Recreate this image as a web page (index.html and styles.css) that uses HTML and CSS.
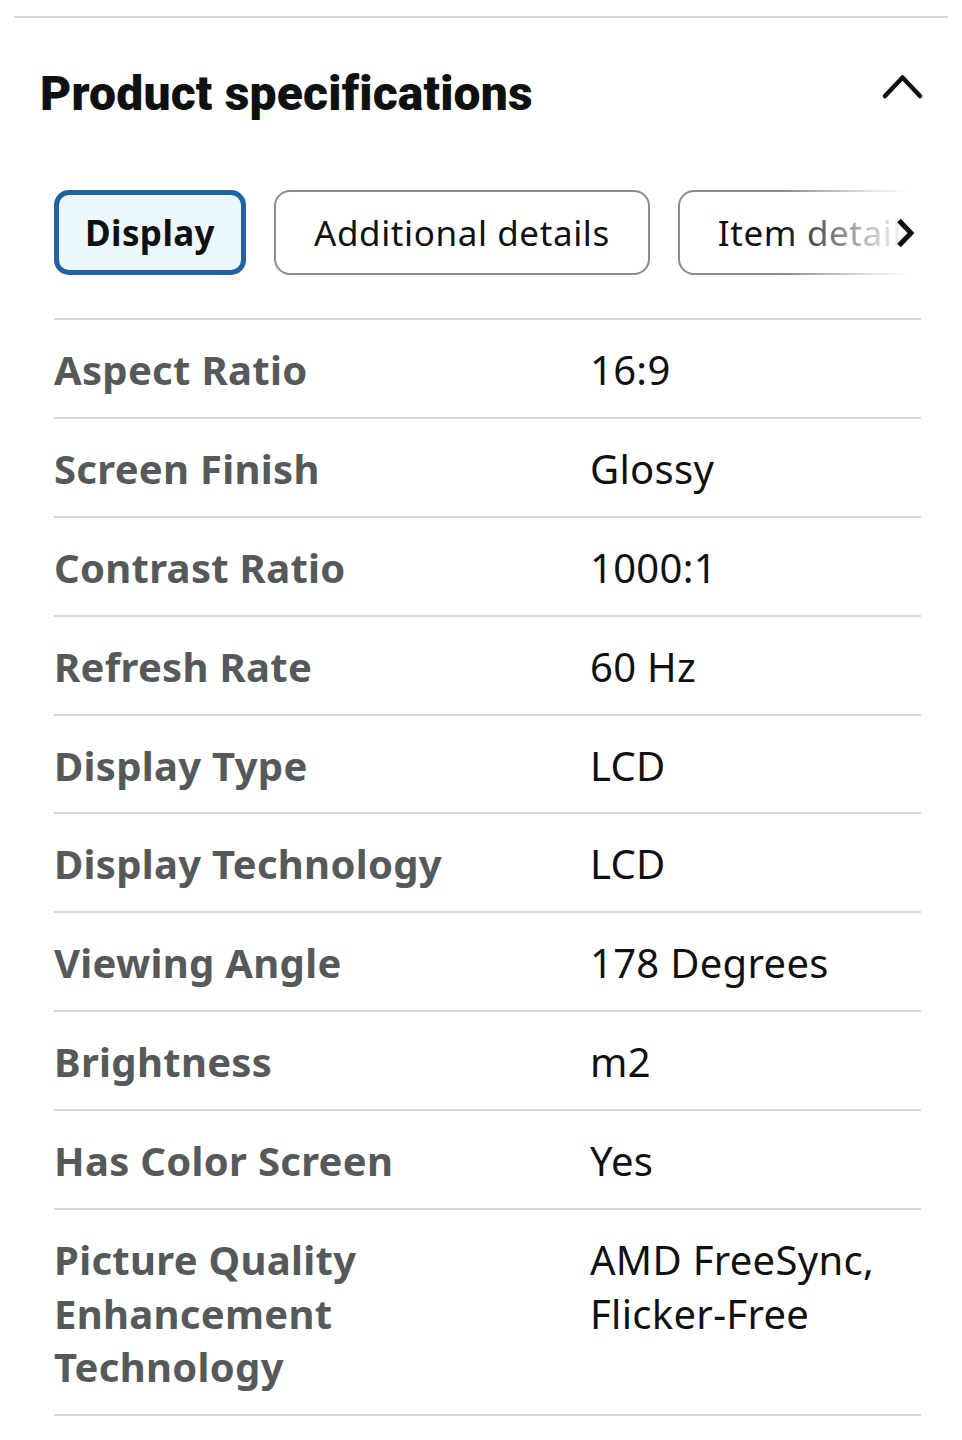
FILE: index.html
```html
<!DOCTYPE html>
<html lang="en">
<head>
<meta charset="utf-8">
<title>Product specifications</title>
<link rel="stylesheet" href="styles.css">
</head>
<body>
<div class="rule"></div>
<section class="specs">
  <header class="specs-head">
    <h2 class="specs-title">Product specifications</h2>
    <svg class="collapse" width="44" height="28" viewBox="0 0 44 28" aria-hidden="true">
      <path d="M4 23 L21.5 4.5 L39 23" fill="none" stroke="#0f1111" stroke-width="4.5" stroke-linecap="round" stroke-linejoin="round"/>
    </svg>
  </header>

  <div class="tabs-wrap">
    <div class="tabs">
      <button class="tab tab-active">Display</button>
      <button class="tab">Additional details</button>
      <button class="tab">Item details</button>
    </div>
    <div class="tabs-fade">
      <svg class="next" width="22" height="32" viewBox="0 0 22 32" aria-hidden="true">
        <path d="M4 3.5 L16 16 L4 28.5" fill="none" stroke="#0f1111" stroke-width="5" stroke-linejoin="miter"/>
      </svg>
    </div>
  </div>

  <div class="table">
    <div class="row"><div class="label">Aspect Ratio</div><div class="value">16:9</div></div>
    <div class="row"><div class="label">Screen Finish</div><div class="value">Glossy</div></div>
    <div class="row"><div class="label">Contrast Ratio</div><div class="value">1000:1</div></div>
    <div class="row"><div class="label">Refresh Rate</div><div class="value">60 Hz</div></div>
    <div class="row"><div class="label">Display Type</div><div class="value">LCD</div></div>
    <div class="row"><div class="label">Display Technology</div><div class="value">LCD</div></div>
    <div class="row"><div class="label">Viewing Angle</div><div class="value">178 Degrees</div></div>
    <div class="row"><div class="label">Brightness</div><div class="value">m2</div></div>
    <div class="row"><div class="label">Has Color Screen</div><div class="value">Yes</div></div>
    <div class="row"><div class="label">Picture Quality Enhancement Technology</div><div class="value">AMD FreeSync, Flicker-Free</div></div>
  </div>
</section>
</body>
</html>
```

FILE: styles.css
```css
* { box-sizing: border-box; }

html, body {
  margin: 0;
  padding: 0;
  background: #ffffff;
}

body {
  font-family: "Noto Sans", "Open Sans", sans-serif;
  color: #0f1111;
}

.rule {
  height: 2px;
  margin: 16px 14px 0;
  background: #d5d9d9;
}

.specs-head {
  display: flex;
  align-items: center;
  justify-content: space-between;
  margin: 46px 37px 0 40px;
}

.specs-title {
  margin: 0;
  font-family: "Roboto", "Liberation Sans", sans-serif;
  font-weight: 900;
  font-size: 48px;
  line-height: 60px;
  letter-spacing: 0.2px;
  color: #0f1111;
}

.collapse {
  display: block;
  margin-top: -14px;
}

.tabs-wrap {
  position: relative;
  margin: 66px 41px 0 54px;
  overflow: hidden;
}

.tabs {
  display: flex;
  gap: 28px;
  white-space: nowrap;
}

.tab {
  flex: none;
  height: 85px;
  display: flex;
  align-items: center;
  padding: 0 38px;
  border: 2px solid #888c8c;
  border-radius: 16px;
  background: #ffffff;
  font-family: "Noto Sans", "Open Sans", sans-serif;
  font-size: 35px;
  letter-spacing: 0.6px;
  color: #0f1111;
}

.tab-active {
  padding: 0 26px;
  border: 5px solid #2162a1;
  border-radius: 15px;
  background: #edf7fe;
  font-weight: 700;
  letter-spacing: 0.4px;
}

.tabs-fade {
  position: absolute;
  top: 0;
  right: 0;
  bottom: 0;
  width: 140px;
  display: flex;
  align-items: center;
  justify-content: flex-end;
  padding-right: 4px;
  background: linear-gradient(to right, rgba(255,255,255,0) 0%, rgba(255,255,255,0.7) 60%, #ffffff 92%);
}

.next { display: block; }

.table {
  margin: 43px 41px 0 54px;
  border-bottom: 2px solid #d5d9d9;
}

.row {
  display: grid;
  grid-template-columns: 536px 1fr;
  padding: 23px 0 20.4px;
  border-top: 2px solid #d5d9d9;
  font-size: 40px;
  line-height: 53.5px;
  letter-spacing: 0.3px;
}

.label {
  font-weight: 700;
  color: #565959;
  padding-right: 24px;
}

.value {
  color: #0f1111;
}
```
